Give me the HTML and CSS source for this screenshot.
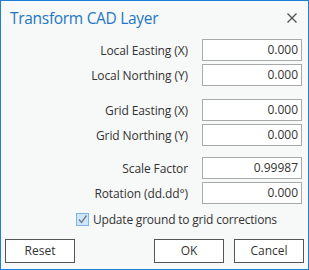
FILE: index.html
```html
<!DOCTYPE html>
<html>
<head>
<meta charset="utf-8">
<link rel="stylesheet" href="styles.css">
</head>
<body>
<div class="dialog">
  <div class="header">
    <span class="title">Transform CAD Layer</span>
    <svg class="close" width="10" height="10" viewBox="0 0 10 10"><path d="M0.5 0.5 L9.5 9.5 M9.5 0.5 L0.5 9.5" stroke="#555" stroke-width="1.4"/></svg>
  </div>
  <div class="form">
    <div class="group">
      <label class="label">Local Easting (X)</label><div class="input">0.000</div>
      <label class="label">Local Northing (Y)</label><div class="input">0.000</div>
    </div>
    <div class="group g2">
      <label class="label">Grid Easting (X)</label><div class="input">0.000</div>
      <label class="label">Grid Northing (Y)</label><div class="input">0.000</div>
    </div>
    <div class="group g3">
      <label class="label">Scale Factor</label><div class="input">0.99987</div>
      <label class="label">Rotation (dd.dd°)</label><div class="input">0.000</div>
    </div>
    <div class="check-row">
      <span class="checkbox"><svg width="11" height="11" viewBox="0 0 11 11"><path d="M2 5.5 L4.5 8.5 L9.5 1.5" fill="none" stroke="#6b7a8c" stroke-width="1.3"/></svg></span>
      <span class="check-label">Update ground to grid corrections</span>
    </div>
  </div>
  <div class="buttons">
    <div class="btn">Reset</div>
    <div class="spacer"></div>
    <div class="btn">OK</div>
    <div class="btn">Cancel</div>
  </div>
</div>
</body>
</html>
```
FILE: styles.css
```css
html, body {
  margin: 0;
  padding: 0;
}
body {
  font-family: "Open Sans", "Noto Sans", sans-serif;
  color: #333;
}
.dialog {
  width: 309px;
  height: 270px;
  box-sizing: border-box;
  border: 1px solid #1e7fd4;
  background: #f7f8f8;
  display: flex;
  flex-direction: column;
}
.header {
  height: 38px;
  display: flex;
  align-items: center;
  justify-content: space-between;
  padding: 0 11px 0 9px;
}
.title {
  font-size: 15.5px;
  letter-spacing: -0.3px;
  color: #2377c2;
  margin-top: -4px;
}
.close {
  margin-top: -4px;
}
.form {
  padding-right: 6px;
}
.group {
  display: grid;
  grid-template-columns: 1fr 100px;
  column-gap: 14px;
  row-gap: 3px;
  align-items: center;
}
.g2 { margin-top: 13px; }
.g3 { margin-top: 11px; }
.label {
  text-align: right;
  font-size: 12px;
  letter-spacing: -0.1px;
  color: #333;
}
.input {
  height: 22px;
  box-sizing: border-box;
  border: 1px solid #a9a9a9;
  background: #fff;
  font-size: 12px;
  text-align: right;
  padding: 0 3px;
  line-height: 20px;
  color: #333;
}
.check-row {
  display: flex;
  align-items: center;
  margin-top: 6px;
  padding-left: 75px;
  height: 18px;
}
.checkbox {
  width: 13px;
  height: 13px;
  box-sizing: border-box;
  border: 1px solid #7fb4e6;
  background: #cfe5f8;
  display: flex;
  align-items: center;
  justify-content: center;
}
.check-label {
  font-size: 12px;
  letter-spacing: -0.2px;
  margin-left: 4px;
}
.buttons {
  display: flex;
  gap: 10px;
  padding: 0 4px;
  margin-top: auto;
  margin-bottom: 6px;
}
.spacer { flex: 1; }
.btn {
  width: 70px;
  height: 24px;
  box-sizing: border-box;
  border: 1px solid #555;
  background: #fff;
  font-size: 12px;
  text-align: center;
  line-height: 22px;
  color: #333;
}
```
